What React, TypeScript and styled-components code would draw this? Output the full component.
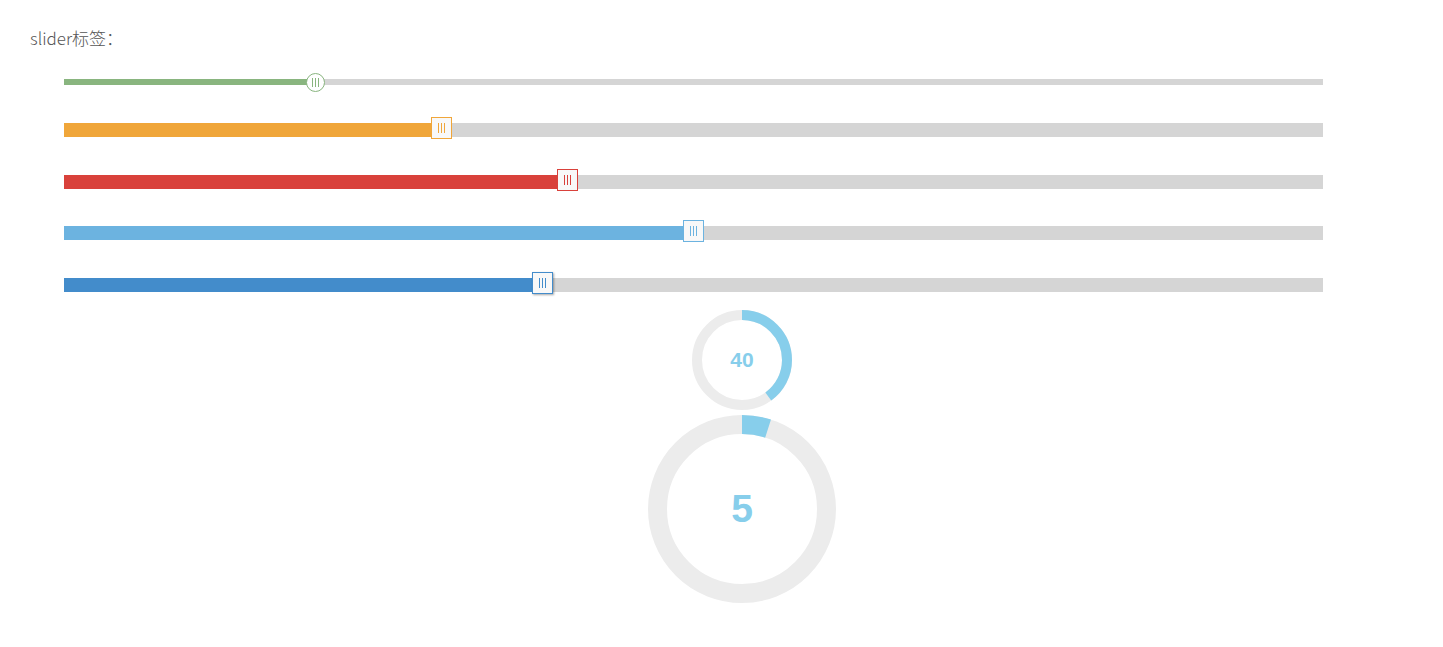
import React from "react";
import styled, { createGlobalStyle } from "styled-components";

const TRACK_W = 1259;

const Global = createGlobalStyle`
  html, body { margin: 0; padding: 0; background: #fff; }
  body { font-family: "Open Sans", "Noto Sans CJK SC", sans-serif; }
`;

const Page = styled.div`
  padding: 28px 0 0 30px;
  width: 1443px;
  height: 647px;
  box-sizing: border-box;
  overflow: hidden;
`;

const Label = styled.div`
  font-family: "Noto Sans CJK SC", "Open Sans", sans-serif;
  font-weight: 300;
  font-size: 17px;
  line-height: 20px;
  color: #555;
`;

const Sliders = styled.div`
  margin: 31px 0 0 34px;
  width: ${TRACK_W}px;
  display: flex;
  flex-direction: column;
`;

const Track = styled.div<{ $h: number; $mt: number }>`
  position: relative;
  height: ${(p) => p.$h}px;
  margin-top: ${(p) => p.$mt}px;
  background: #d5d5d5;
`;

const Fill = styled.div<{ $color: string }>`
  height: 100%;
  background: ${(p) => p.$color};
`;

const Handle = styled.div<{ $color: string; $round?: boolean; $shadow?: boolean }>`
  position: absolute;
  top: -6px;
  box-sizing: border-box;
  width: ${(p) => (p.$round ? 19 : 21)}px;
  height: ${(p) => (p.$round ? 19 : 22)}px;
  border: 1px solid ${(p) => p.$color};
  border-radius: ${(p) => (p.$round ? "50%" : "0")};
  background: ${(p) => (p.$round ? "#fff" : "#f8f8f8")};
  box-shadow: ${(p) => (p.$shadow ? "1px 1px 2px rgba(0,0,0,0.35)" : "none")};
  display: flex;
  align-items: center;
  justify-content: center;
  gap: 2px;
`;

const Grip = styled.span<{ $color: string; $h: number }>`
  display: block;
  flex: none;
  width: 1px;
  height: ${(p) => p.$h}px;
  background: ${(p) => p.$color};
`;

const CircleColumn = styled.div`
  margin: 18px 0 0 612px;
  width: 200px;
  display: flex;
  flex-direction: column;
  align-items: center;
  gap: 5px;
`;

const Dial = styled.div<{ $size: number }>`
  position: relative;
  width: ${(p) => p.$size}px;
  height: ${(p) => p.$size}px;
`;

const DialValue = styled.div<{ $fs: number }>`
  position: absolute;
  inset: 0;
  display: flex;
  align-items: center;
  justify-content: center;
  font-family: "Liberation Sans", Arial, sans-serif;
  font-weight: 700;
  font-size: ${(p) => p.$fs}px;
  color: #87ceeb;
  padding-bottom: 1px;
`;

type SliderDef = { value: number; color: string; h: number; mt: number; round?: boolean; shadow?: boolean };

const sliders: SliderDef[] = [
  { value: 20, color: "#89b57f", h: 6, mt: 0, round: true },
  { value: 30, color: "#f0a63a", h: 14, mt: 38 },
  { value: 40, color: "#d9413b", h: 14, mt: 38 },
  { value: 50, color: "#6cb3e0", h: 14, mt: 37 },
  { value: 38, color: "#438ccb", h: 14, mt: 38, shadow: true },
];

function Slider({ s }: { s: SliderDef }) {
  const hw = s.round ? 9.5 : 10.5;
  const left = Math.round((s.value / 100) * TRACK_W - hw);
  return (
    <Track $h={s.h} $mt={s.mt}>
      <Fill $color={s.color} style={{ width: `${s.value}%` }} />
      <Handle $color={s.color} $round={s.round} $shadow={s.shadow} style={{ left: `${left}px` }}>
        {[0, 1, 2].map((i) => (
          <Grip key={i} $color={s.color} $h={s.round ? 9 : 10} />
        ))}
      </Handle>
    </Track>
  );
}

function Ring({ size, stroke, value, fs }: { size: number; stroke: number; value: number; fs: number }) {
  const r = (size - stroke) / 2;
  const c = 2 * Math.PI * r;
  return (
    <Dial $size={size}>
      <svg width={size} height={size} viewBox={`0 0 ${size} ${size}`}>
        <circle cx={size / 2} cy={size / 2} r={r} fill="none" stroke="#ececec" strokeWidth={stroke} />
        <circle
          cx={size / 2}
          cy={size / 2}
          r={r}
          fill="none"
          stroke="#87ceeb"
          strokeWidth={stroke}
          strokeDasharray={`${(c * value) / 100} ${c}`}
          transform={`rotate(-90 ${size / 2} ${size / 2})`}
        />
      </svg>
      <DialValue $fs={fs}>{value}</DialValue>
    </Dial>
  );
}

export default function App() {
  return (
    <>
      <Global />
      <Page>
        <Label>slider标签：</Label>
        <Sliders>
          {sliders.map((s, i) => (
            <Slider key={i} s={s} />
          ))}
        </Sliders>
        <CircleColumn>
          <Ring size={100} stroke={10} value={40} fs={21} />
          <Ring size={188} stroke={19} value={5} fs={39} />
        </CircleColumn>
      </Page>
    </>
  );
}
